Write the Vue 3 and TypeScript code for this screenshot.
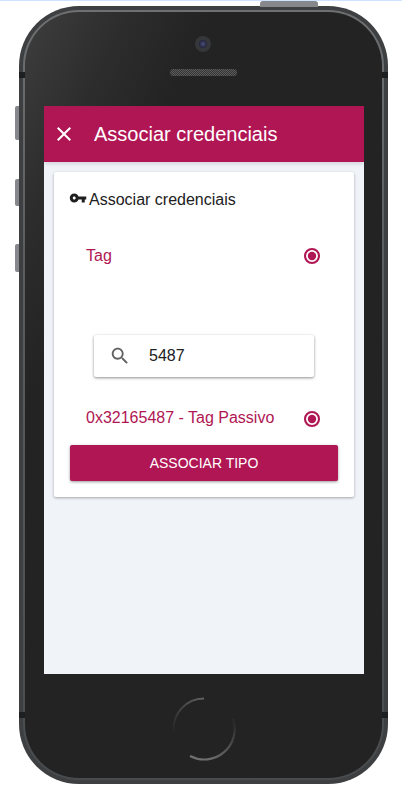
<script setup lang="ts">
const title = 'Associar credenciais'
</script>

<template>
  <div class="page">
    <div class="topline"></div>
    <div class="phone">
      <span class="top-btn"></span>
      <span class="side-btn b1"></span>
      <span class="side-btn b2"></span>
      <span class="side-btn b3"></span>
      <span class="band l t"></span>
      <span class="band r t"></span>
      <span class="band l b"></span>
      <span class="band r b"></span>
      <div class="ring">
        <div class="face">
          <div class="camera"><span class="lens"></span></div>
          <div class="speaker"></div>
          <main class="screen">
            <header class="appbar">
              <svg class="close" viewBox="0 0 24 24" width="24" height="24">
                <path fill="#fff" d="M19 6.41 17.59 5 12 10.59 6.41 5 5 6.41 10.59 12 5 17.59 6.41 19 12 13.41 17.59 19 19 17.59 13.41 12z" />
              </svg>
              <h1>{{ title }}</h1>
            </header>
            <section class="card">
              <div class="card-title">
                <svg viewBox="0 0 24 24" width="18" height="18">
                  <path fill="#1f1f1f" d="M12.65 10C11.83 7.67 9.61 6 7 6c-3.31 0-6 2.69-6 6s2.69 6 6 6c2.61 0 4.83-1.67 5.65-4H17v4h4v-4h2v-4H12.65zM7 14c-1.1 0-2-.9-2-2s.9-2 2-2 2 .9 2 2-.9 2-2 2z" />
                </svg>
                <span>{{ title }}</span>
              </div>
              <div class="option first">
                <span>Tag</span>
                <svg class="radio" viewBox="0 0 20 20" width="20" height="20">
                  <circle cx="10" cy="10" r="7" fill="none" stroke="#b01654" stroke-width="2.1" />
                  <circle cx="10" cy="10" r="4.2" fill="#b01654" />
                </svg>
              </div>
              <div class="search">
                <svg viewBox="0 0 24 24" width="22" height="22">
                  <path fill="#616161" d="M15.5 14h-.79l-.28-.27C15.41 12.59 16 11.11 16 9.5 16 5.91 13.09 3 9.5 3S3 5.91 3 9.5 5.91 16 9.5 16c1.61 0 3.09-.59 4.23-1.57l.27.28v.79l5 4.99L20.49 19l-4.99-5zm-6 0C7.01 14 5 11.99 5 9.5S7.01 5 9.5 5 14 7.01 14 9.5 11.99 14 9.5 14z" />
                </svg>
                <span>5487</span>
              </div>
              <div class="option second">
                <span>0x32165487 - Tag Passivo</span>
                <svg class="radio lower" viewBox="0 0 20 20" width="20" height="20">
                  <circle cx="10" cy="10" r="7" fill="none" stroke="#b01654" stroke-width="2.1" />
                  <circle cx="10" cy="10" r="4.2" fill="#b01654" />
                </svg>
              </div>
              <button class="action" type="button">ASSOCIAR TIPO</button>
            </section>
          </main>
          <svg class="home" viewBox="0 0 64 64" width="64" height="64">
            <defs>
              <linearGradient id="arcA" x1="1" y1="0" x2="0" y2="1">
                <stop offset="0" stop-color="#666" stop-opacity="0.95" />
                <stop offset="1" stop-color="#666" stop-opacity="0.05" />
              </linearGradient>
              <linearGradient id="arcB" x1="0.7" y1="0" x2="0.3" y2="1">
                <stop offset="0" stop-color="#707070" stop-opacity="0.1" />
                <stop offset="1" stop-color="#707070" stop-opacity="1" />
              </linearGradient>
            </defs>
            <path d="M32 1.5 A30.5 30.5 0 0 0 1.6 34" fill="none" stroke="url(#arcA)" stroke-width="2" />
            <path d="M61 22 A30.5 30.5 0 0 1 18 59" fill="none" stroke="url(#arcB)" stroke-width="2.2" />
          </svg>
        </div>
      </div>
    </div>
  </div>
</template>

<style>
html,
body {
  margin: 0;
  background: #fff;
}
</style>

<style scoped>
.page {
  width: 402px;
  height: 803px;
  overflow: hidden;
  background: #fff;
  font-family: "Liberation Sans", Arial, sans-serif;
}
.topline {
  height: 1px;
  background: #cfe2ff;
  margin-bottom: 5px;
}
.phone {
  position: relative;
  width: 369px;
  margin-left: 19px;
  padding: 4px;
  box-sizing: border-box;
  border-radius: 60px;
  background: #3d3f40;
}
.top-btn {
  position: absolute;
  left: 241px;
  top: -5px;
  width: 58px;
  height: 6px;
  border-radius: 3px 3px 0 0;
  background: #85878a;
}
.side-btn {
  position: absolute;
  left: -4px;
  width: 4px;
  border-radius: 2px 0 0 2px;
  background: #85878c;
}
.b1 {
  top: 100px;
  height: 34px;
}
.b2 {
  top: 173px;
  height: 27px;
}
.b3 {
  top: 238px;
  height: 28px;
}
.band {
  position: absolute;
  width: 6px;
  height: 6px;
  background: #1e1f20;
  z-index: 2;
}
.band.l {
  left: 0;
}
.band.r {
  right: 0;
}
.band.t {
  top: 66px;
}
.band.b {
  top: 706px;
}
.ring {
  padding: 2px;
  border-radius: 56px;
  background: linear-gradient(180deg, #6e7072 0%, #5c5f61 30%, #484c4e 100%);
}
.face {
  position: relative;
  display: flex;
  flex-direction: column;
  align-items: center;
  height: 766px;
  box-sizing: border-box;
  padding-top: 24px;
  border-radius: 54px;
  background: linear-gradient(115deg, #3e3e3e 0%, #2d2d2d 14%, #232323 26%, #232323 100%);
}
.camera {
  display: flex;
  align-items: center;
  justify-content: center;
  width: 16px;
  height: 16px;
  margin-left: -1px;
  border-radius: 50%;
  background: #36373b;
}
.lens {
  width: 8px;
  height: 8px;
  border-radius: 50%;
  background: radial-gradient(circle, #4c4f7a 0%, #1d1e33 80%);
}
.speaker {
  width: 67px;
  height: 7px;
  margin-top: 17px;
  border-radius: 4px;
  background: repeating-conic-gradient(#5a5a5a 0 25%, #363636 0 50%) 0 0 / 2px 2px;
}
.screen {
  width: 320px;
  height: 568px;
  margin-top: 30px;
  margin-left: 1px;
  background: #f0f3f8;
  overflow: hidden;
}
.appbar {
  display: flex;
  align-items: center;
  gap: 18px;
  height: 56px;
  padding-left: 8px;
  background: #b01654;
  box-shadow: 0 2px 4px rgba(0, 0, 0, 0.12);
}
.close {
  flex: none;
}
.appbar h1 {
  margin: 0;
  color: #fff;
  font-size: 20px;
  font-weight: 400;
  line-height: 24px;
}
.card {
  display: flex;
  flex-direction: column;
  width: 300px;
  box-sizing: border-box;
  margin: 10px 0 0 10px;
  padding: 16px;
  border-radius: 2px;
  background: #fff;
  box-shadow: 0 1px 3px rgba(0, 0, 0, 0.32);
}
.card-title {
  display: flex;
  align-items: center;
  height: 22px;
  color: #212121;
  font-size: 16px;
  line-height: 22px;
}
.card-title svg {
  flex: none;
  margin: -2px 2px 0 -1px;
}
.card-title span {
  margin-top: 2px;
}
.option {
  display: flex;
  align-items: center;
  justify-content: space-between;
  height: 40px;
  padding: 0 16px;
  color: #b01654;
  font-size: 16px;
}
.radio {
  flex: none;
}
.radio.lower {
  margin-top: 2px;
}
.first {
  margin-top: 26px;
}
.second {
  margin-top: 21px;
}
.search {
  display: flex;
  align-items: center;
  gap: 18px;
  height: 42px;
  margin: 59px 24px 0;
  padding-left: 15px;
  border-radius: 2px;
  background: #fff;
  box-shadow: 0 1px 3px rgba(0, 0, 0, 0.45);
  color: #212121;
  font-size: 16px;
}
.action {
  height: 36px;
  margin-top: 7px;
  border: 0;
  border-radius: 2px;
  background: #b01654;
  box-shadow: 0 1px 3px rgba(0, 0, 0, 0.4);
  color: #fff;
  font-family: inherit;
  font-size: 14px;
  font-weight: 400;
}
.home {
  margin-top: 23px;
}
</style>
